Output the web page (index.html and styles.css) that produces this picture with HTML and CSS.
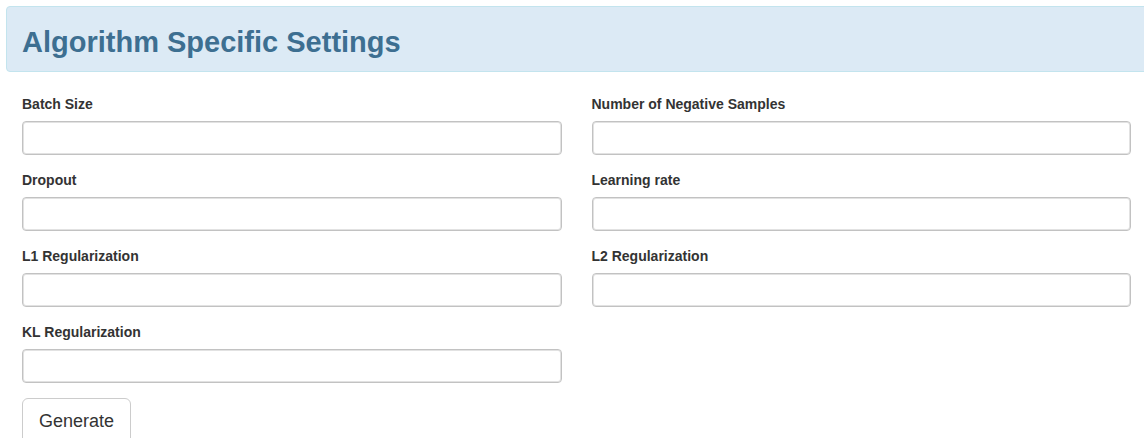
FILE: index.html
```html
<!DOCTYPE html>
<html lang="en">
<head>
<meta charset="utf-8">
<title>Algorithm Specific Settings</title>
<link rel="stylesheet" href="styles.css">
</head>
<body>
<div class="panel">
  <h3 class="panel-title">Algorithm Specific Settings</h3>
</div>
<form class="settings">
  <div class="field">
    <label class="label">Batch Size</label>
    <input class="input" type="text">
  </div>
  <div class="field">
    <label class="label">Number of Negative Samples</label>
    <input class="input" type="text">
  </div>
  <div class="field">
    <label class="label">Dropout</label>
    <input class="input" type="text">
  </div>
  <div class="field">
    <label class="label">Learning rate</label>
    <input class="input" type="text">
  </div>
  <div class="field">
    <label class="label">L1 Regularization</label>
    <input class="input" type="text">
  </div>
  <div class="field">
    <label class="label">L2 Regularization</label>
    <input class="input" type="text">
  </div>
  <div class="field">
    <label class="label">KL Regularization</label>
    <input class="input" type="text">
  </div>
  <div class="field"></div>
  <div class="actions">
    <button class="btn" type="button">Generate</button>
  </div>
</form>
</body>
</html>
```
FILE: styles.css
```css
html, body {
  margin: 0;
  padding: 0;
  overflow: hidden;
  background: #fff;
}
body {
  font-family: "Liberation Sans", Arial, Helvetica, sans-serif;
  color: #333;
}
.panel {
  margin: 6px -20px 0 6px;
  background: #dceaf5;
  border: 1px solid #c3e4ee;
  border-radius: 4px;
  padding: 19px 15px 13px 15px;
}
.panel-title {
  margin: 0;
  font-size: 29px;
  line-height: 32px;
  font-weight: bold;
  color: #3d6f91;
}
.settings {
  display: grid;
  grid-template-columns: 1fr 1fr;
  column-gap: 30px;
  row-gap: 15px;
  padding: 22px 13px 0 22px;
}
.field {
  display: flex;
  flex-direction: column;
}
.label {
  font-size: 14px;
  line-height: 20px;
  font-weight: bold;
  margin-bottom: 7px;
  color: #333;
}
.input {
  box-sizing: border-box;
  height: 34px;
  width: 100%;
  margin: 0;
  border: 1px solid #c2c2c2;
  border-radius: 4px;
  box-shadow: inset 0 0 0 1px #e2e2e2;
  background: #fff;
}
.actions {
  grid-column: 1 / 2;
}
.btn {
  font-family: "Liberation Sans", Arial, Helvetica, sans-serif;
  font-size: 18px;
  line-height: 24px;
  padding: 10px 16px;
  color: #333;
  background: #fff;
  border: 1px solid #ccc;
  border-radius: 6px;
}
```
